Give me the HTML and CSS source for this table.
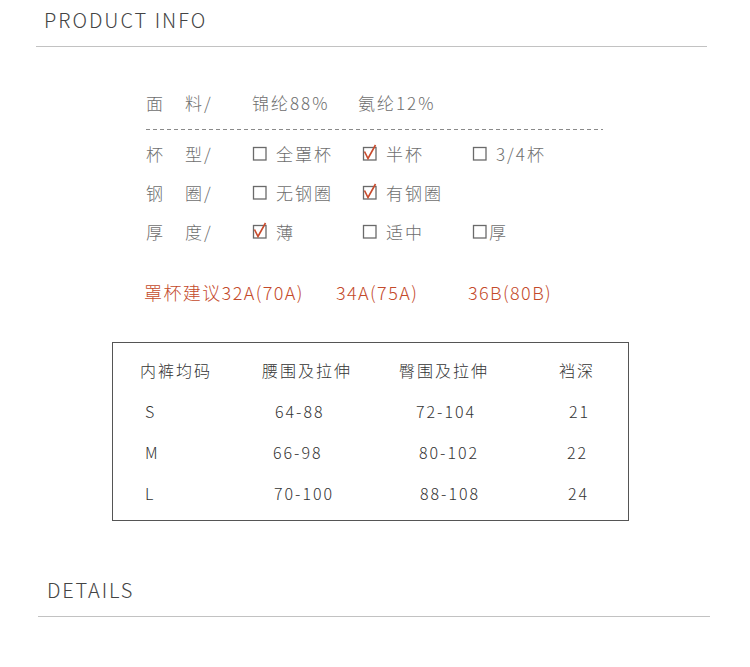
FILE: index.html
```html
<!DOCTYPE html>
<html lang="zh">
<head>
<meta charset="utf-8">
<title>Product Info</title>
<link rel="stylesheet" href="styles.css">
</head>
<body>
<div class="page">
  <div class="sec-head sec-head--top"><h2 class="sec-title">PRODUCT INFO</h2></div>

  <div class="info">
    <div class="row">
      <div class="label"><span class="l1">面</span><span>料/</span></div>
      <div class="val">锦纶88%</div>
      <div class="val">氨纶12%</div>
    </div>
    <div class="dash"></div>
    <div class="row">
      <div class="label"><span class="l1">杯</span><span>型/</span></div>
      <div class="opt"><svg class="cb" viewBox="0 0 16 18" width="16" height="18"><rect x="1.5" y="4.5" width="12.5" height="12.5" fill="none" stroke="#6a6a6a" stroke-width="1.3"/></svg><span>全罩杯</span></div>
      <div class="opt"><svg class="cb" viewBox="0 0 16 18" width="16" height="18"><rect x="1.5" y="4.5" width="12.5" height="12.5" fill="none" stroke="#6a6a6a" stroke-width="1.3"/><path d="M2.5 8.5 L6 15.5 L13.5 2" fill="none" stroke="#c84a2c" stroke-width="1.6"/></svg><span>半杯</span></div>
      <div class="opt"><svg class="cb" viewBox="0 0 16 18" width="16" height="18"><rect x="1.5" y="4.5" width="12.5" height="12.5" fill="none" stroke="#6a6a6a" stroke-width="1.3"/></svg><span>3/4杯</span></div>
    </div>
    <div class="row">
      <div class="label"><span class="l1">钢</span><span>圈/</span></div>
      <div class="opt"><svg class="cb" viewBox="0 0 16 18" width="16" height="18"><rect x="1.5" y="4.5" width="12.5" height="12.5" fill="none" stroke="#6a6a6a" stroke-width="1.3"/></svg><span>无钢圈</span></div>
      <div class="opt"><svg class="cb" viewBox="0 0 16 18" width="16" height="18"><rect x="1.5" y="4.5" width="12.5" height="12.5" fill="none" stroke="#6a6a6a" stroke-width="1.3"/><path d="M2.5 8.5 L6 15.5 L13.5 2" fill="none" stroke="#c84a2c" stroke-width="1.6"/></svg><span>有钢圈</span></div>
    </div>
    <div class="row">
      <div class="label"><span class="l1">厚</span><span>度/</span></div>
      <div class="opt"><svg class="cb" viewBox="0 0 16 18" width="16" height="18"><rect x="1.5" y="4.5" width="12.5" height="12.5" fill="none" stroke="#6a6a6a" stroke-width="1.3"/><path d="M2.5 8.5 L6 15.5 L13.5 2" fill="none" stroke="#c84a2c" stroke-width="1.6"/></svg><span>薄</span></div>
      <div class="opt"><svg class="cb" viewBox="0 0 16 18" width="16" height="18"><rect x="1.5" y="4.5" width="12.5" height="12.5" fill="none" stroke="#6a6a6a" stroke-width="1.3"/></svg><span>适中</span></div>
      <div class="opt opt--close"><svg class="cb" viewBox="0 0 16 18" width="16" height="18"><rect x="1.5" y="4.5" width="12.5" height="12.5" fill="none" stroke="#6a6a6a" stroke-width="1.3"/></svg><span>厚</span></div>
    </div>

    <div class="suggest">
      <span class="s1">罩杯建议32A(70A)</span>
      <span class="s2">34A(75A)</span>
      <span>36B(80B)</span>
    </div>
  </div>

  <div class="size-table">
    <div class="trow">
      <span class="c1">内裤均码</span><span class="c2">腰围及拉伸</span><span class="c3">臀围及拉伸</span><span class="c4">裆深</span>
    </div>
    <div class="trow">
      <span class="c1 d">S</span><span class="c2 d2a">64-88</span><span class="c3 d3a">72-104</span><span class="c4 d4a">21</span>
    </div>
    <div class="trow">
      <span class="c1 d">M</span><span class="c2 d2b">66-98</span><span class="c3 d3b">80-102</span><span class="c4 d4b">22</span>
    </div>
    <div class="trow">
      <span class="c1 d">L</span><span class="c2 d2c">70-100</span><span class="c3 d3c">88-108</span><span class="c4 d4c">24</span>
    </div>
  </div>

  <div class="sec-head sec-head--bottom"><h2 class="sec-title sec-title--narrow">DETAILS</h2></div>
</div>
</body>
</html>
```

FILE: styles.css
```css
* { box-sizing: border-box; }
html, body { margin: 0; padding: 0; background: #fff; }
body {
  font-family: "Noto Sans CJK SC", "Noto Sans", sans-serif;
  font-weight: 300;
  color: #6e6e6e;
}
.page { width: 750px; height: 667px; overflow: hidden; }

.sec-head { border-bottom: 1px solid #c2c2c2; }
.sec-head--top { margin: 0 43px 0 36px; padding: 6px 0 12px 8px; }
.sec-head--bottom { margin: 55px 40px 0 38px; padding: 0 0 12px 9px; }
.sec-title {
  margin: 0;
  font-size: 20px;
  line-height: 28px;
  font-weight: 300;
  letter-spacing: 2px;
  color: #444;
}
.sec-title--narrow { letter-spacing: 1.8px; }

.info { margin: 44px 0 0 146px; font-size: 17px; letter-spacing: 2px; }
.row { display: flex; align-items: center; height: 24px; line-height: 24px; margin-bottom: 15px; }
.row:first-child { margin-bottom: 0; }
.label { width: 106px; display: flex; }
.l1 { width: 39px; }
.val { width: 106px; }

.dash {
  width: 457px;
  height: 1px;
  margin: 14px 0 12px;
  background: repeating-linear-gradient(to right, #8a8a8a 0 4px, transparent 4px 7px);
}

.opt { width: 110px; display: flex; align-items: center; }
.opt .cb { margin-right: 8px; margin-top: -4px; flex: none; }
.opt--close .cb { margin-right: 1px; }

.suggest {
  margin-top: 36px;
  display: flex;
  font-size: 18px;
  line-height: 24px;
  letter-spacing: 1.4px;
  color: #c44a2b;
  margin-left: -2px;
}
.s1 { width: 192px; }
.s2 { width: 132px; }

.size-table {
  margin: 38px 0 0 112px;
  width: 517px;
  border: 1px solid #555;
  padding: 15px 0 15px 27px;
  color: #333;
  font-size: 16px;
  letter-spacing: 2px;
  display: flex;
  flex-direction: column;
  gap: 17px;
}
.trow { display: grid; grid-template-columns: 122px 137px 160px 1fr; height: 24px; line-height: 24px; }
.d { padding-left: 5px; }
.d2a { padding-left: 13px; }
.d2b { padding-left: 11px; }
.d2c { padding-left: 12px; }
.d3a { padding-left: 17px; }
.d3b { padding-left: 20px; }
.d3c { padding-left: 21px; }
.d4a { padding-left: 10px; }
.d4b { padding-left: 8px; }
.d4c { padding-left: 9px; }
```
